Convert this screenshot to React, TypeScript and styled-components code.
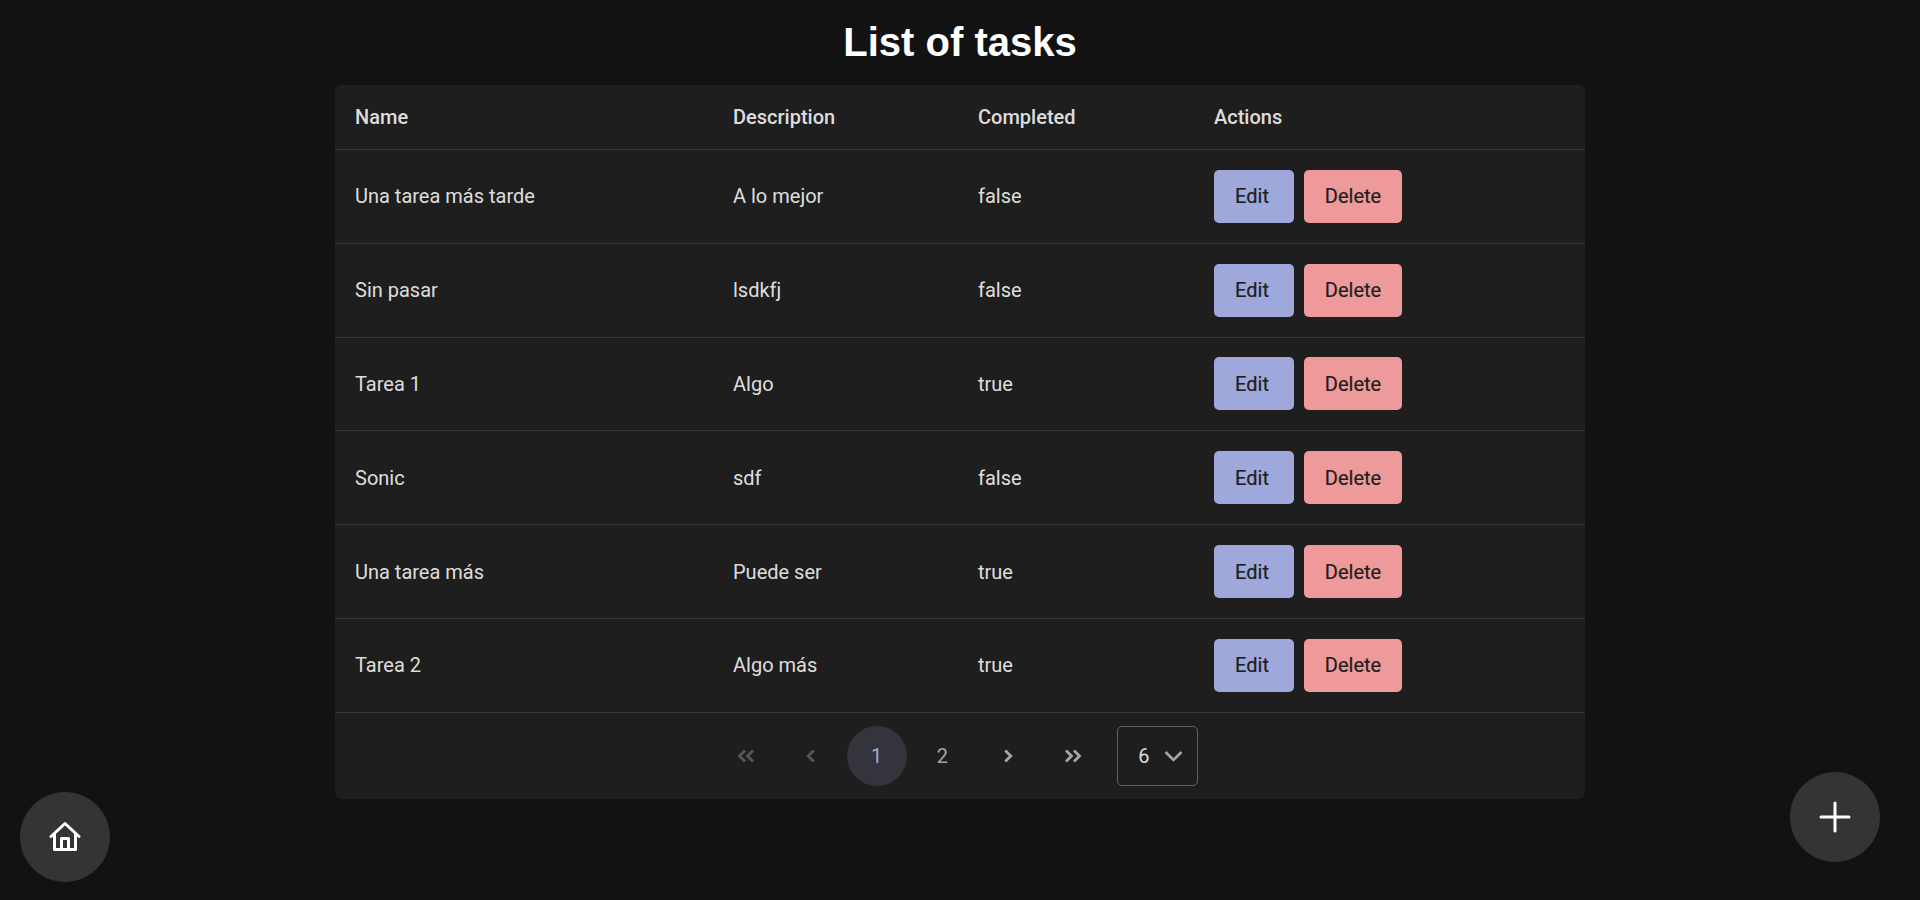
import React from 'react';
import styled, { createGlobalStyle } from 'styled-components';

const tasks = [
  { name: 'Una tarea más tarde', description: 'A lo mejor', completed: false },
  { name: 'Sin pasar', description: 'lsdkfj', completed: false },
  { name: 'Tarea 1', description: 'Algo', completed: true },
  { name: 'Sonic', description: 'sdf', completed: false },
  { name: 'Una tarea más', description: 'Puede ser', completed: true },
  { name: 'Tarea 2', description: 'Algo más', completed: true },
];

const Chevron = ({ dir, double }: { dir: 'left' | 'right'; double?: boolean }) => {
  const left = dir === 'left';
  const one = left ? 'M10.750 3.500 5.250 9l5.500 5.500' : 'M5.250 3.500 10.750 9l-5.500 5.500';
  const two = left
    ? 'M8 3.500 2.500 9 8 14.500M16 3.500 10.500 9l5.500 5.500'
    : 'M2 3.500 7.500 9 2 14.500M10 3.500 15.500 9 10 14.500';
  return (
    <svg width={double ? 18 : 16} height="18" viewBox={double ? '0 0 18 18' : '0 0 16 18'} fill="none" stroke="currentColor" strokeWidth="2.800">
      <path d={double ? two : one} />
    </svg>
  );
};

export default function App() {
  return (
    <Page>
      <GlobalStyle />
      <Title>List of tasks</Title>
      <Card>
        <Table>
          <colgroup>
            <col width="378" />
            <col width="245" />
            <col width="236" />
            <col width="391" />
          </colgroup>
          <thead>
            <tr>
              <HeadCell>Name</HeadCell>
              <HeadCell>Description</HeadCell>
              <HeadCell>Completed</HeadCell>
              <HeadCell>Actions</HeadCell>
            </tr>
          </thead>
          <tbody>
            {tasks.map(task => (
              <tr key={task.name}>
                <Cell>{task.name}</Cell>
                <Cell>{task.description}</Cell>
                <Cell>{String(task.completed)}</Cell>
                <Cell>
                  <Actions>
                    <EditButton>Edit</EditButton>
                    <DeleteButton>Delete</DeleteButton>
                  </Actions>
                </Cell>
              </tr>
            ))}
          </tbody>
        </Table>
        <Paginator>
          <PageButton disabled><Chevron dir="left" double /></PageButton>
          <PageButton disabled><Chevron dir="left" /></PageButton>
          <PageButton active>1</PageButton>
          <PageButton>2</PageButton>
          <PageButton><Chevron dir="right" /></PageButton>
          <PageButton><Chevron dir="right" double /></PageButton>
          <RowsSelect>
            <span>6</span>
            <svg width="19" height="18" viewBox="0 0 19 18" fill="none" stroke="rgba(255,255,255,0.6)" strokeWidth="2.600">
              <path d="M1.500 5 9.500 13l8-8" />
            </svg>
          </RowsSelect>
        </Paginator>
      </Card>
      <HomeButton>
        <svg width="32" height="32" viewBox="0 0 32 32" fill="none" stroke="#fff" strokeWidth="3" strokeLinecap="round" strokeLinejoin="round">
          <path d="M2 15.500 16 2.500l14 13" />
          <path d="M5.500 13v15.500h21V13" />
          <path d="M12.500 28V17.500h7V28" />
        </svg>
      </HomeButton>
      <AddButton>
        <svg width="32" height="32" viewBox="0 0 32 32" fill="none" stroke="#fff" strokeWidth="3" strokeLinecap="round">
          <path d="M16 2v28M2 16h28" />
        </svg>
      </AddButton>
    </Page>
  );
}

const GlobalStyle = createGlobalStyle`
  html, body {
    margin: 0;
    height: 100%;
    background: #121212;
  }
  body {
    font-family: Roboto, "Liberation Sans", sans-serif;
    color: rgba(255, 255, 255, 0.87);
    overflow: hidden;
  }
`;

const Page = styled.div`
  height: 900px;
  display: flex;
  flex-direction: column;
  align-items: center;
`;

const Title = styled.h1`
  margin: 0;
  height: 85px;
  line-height: 85px;
  font-family: "Liberation Sans", Arial, sans-serif;
  font-size: 40px;
  font-weight: 700;
  color: #fff;
`;

const Card = styled.div`
  width: 1250px;
  background: #1e1e1e;
  border-radius: 6px;
  overflow: hidden;
`;

const Table = styled.table`
  width: 100%;
  table-layout: fixed;
  border-collapse: separate;
  border-spacing: 0;
  font-size: 20px;
`;

const HeadCell = styled.th`
  height: 64px;
  padding: 0 20px;
  text-align: left;
  font-weight: 500;
  border-bottom: 1px solid #383838;
`;

const Cell = styled.td`
  height: 92.8px;
  padding: 0 20px;
  border-bottom: 1px solid #383838;
`;

const Actions = styled.div`
  display: flex;
  gap: 10px;
`;

const ActionButton = styled.button`
  height: 53px;
  padding: 0;
  border: 0;
  border-radius: 5px;
  color: #1e1e1e;
  font: 400 20px Roboto, sans-serif;
  -webkit-text-stroke: 0.2px #1e1e1e;
`;

const EditButton = styled(ActionButton)`
  width: 80px;
  padding-right: 4px;
  background: #9fa8da;
`;

const DeleteButton = styled(ActionButton)`
  width: 98px;
  background: #ef9a9a;
`;

const Paginator = styled.div`
  height: 86px;
  padding-left: 1px;
  display: flex;
  align-items: center;
  justify-content: center;
`;

const PageButton = styled.button<{ active?: boolean; disabled?: boolean }>`
  width: 60px;
  height: 60px;
  margin: 0 2.8px;
  padding: 0;
  display: flex;
  align-items: center;
  justify-content: center;
  border: 0;
  border-radius: 50%;
  background: ${props => (props.active ? 'rgba(159, 168, 218, 0.16)' : 'transparent')};
  color: ${props =>
    props.active ? '#9fa8da' : props.disabled ? 'rgba(255, 255, 255, 0.25)' : 'rgba(255, 255, 255, 0.6)'};
  font: 400 20px Roboto, sans-serif;
`;

const RowsSelect = styled.div`
  width: 81px;
  height: 60px;
  margin: 0 10px 0 11px;
  box-sizing: border-box;
  padding: 0 14px 0 20px;
  display: flex;
  align-items: center;
  justify-content: space-between;
  border: 1px solid rgba(255, 255, 255, 0.3);
  border-radius: 5px;
  font-size: 20px;
`;

const RoundButton = styled.button`
  position: fixed;
  width: 90px;
  height: 90px;
  padding: 0;
  display: flex;
  align-items: center;
  justify-content: center;
  border: 0;
  border-radius: 50%;
  background: #343434;
`;

const HomeButton = styled(RoundButton)`
  left: 20px;
  bottom: 18px;
`;

const AddButton = styled(RoundButton)`
  right: 40px;
  bottom: 38px;
`;
